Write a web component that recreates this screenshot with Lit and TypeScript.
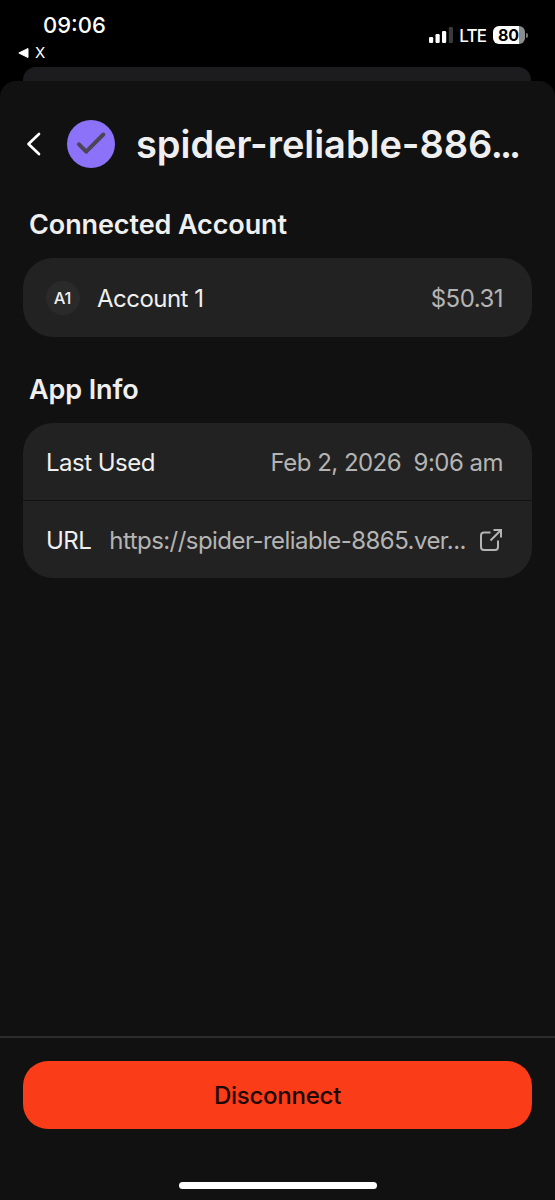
import { LitElement, html, css, svg } from "lit";
import { customElement } from "lit/decorators.js";

@customElement("status-bar")
class StatusBar extends LitElement {
  static styles = css`
    :host { display: flex; justify-content: space-between; height: 67px; color: #fff; }
    .left { display: flex; flex-direction: column; padding: 11px 0 0 18px; }
    .time { font-size: 22px; font-weight: 500; line-height: 28px; padding-left: 25px; letter-spacing: 0; }
    .back { display: flex; align-items: center; gap: 6px; font-size: 15px; line-height: 20px; margin-top: 4px; }
    .right { display: flex; align-items: center; height: 20px; padding: 25px 27px 0 0; }
    .lte { font-size: 17px; font-weight: 500; line-height: 20px; margin: 2px 7px 0 6px; letter-spacing: -0.9px; }
    .battery { display: flex; align-items: center; gap: 1px; }
    .cell { width: 32px; height: 18px; border-radius: 6px; color: #000;
      background: linear-gradient(90deg, #fff 80%, #8c8c8c 80%);
      font-size: 16px; font-weight: 700; line-height: 18px; text-indent: 5px; letter-spacing: -0.2px; }
    .nub { width: 2px; height: 5px; border-radius: 0 2px 2px 0; background: #777; }
    svg { display: block; }
  `;
  render() {
    return html`
      <div class="left">
        <div class="time">09:06</div>
        <div class="back">
          <svg width="11" height="10" viewBox="0 0 11 10"><path d="M10 .5v9L.8 5z" fill="#fff" stroke="#fff" stroke-linejoin="round"/></svg>
          <span>X</span>
        </div>
      </div>
      <div class="right">
        <svg width="24" height="16" viewBox="0 0 24 16">
          ${[[0, 10, 6], [6.5, 7, 9], [13, 4, 12], [19.8, 0, 16]].map(
            ([x, y, h], i) => svg`<rect x=${x} y=${y} width="4.2" height=${h} rx="1.2" fill=${i < 3 ? "#fff" : "#3a3a3a"}/>`
          )}
        </svg>
        <span class="lte">LTE</span>
        <div class="battery"><div class="cell">80</div><div class="nub"></div></div>
      </div>
    `;
  }
}

@customElement("app-root")
class AppRoot extends LitElement {
  static styles = css`
    :host { display: flex; flex-direction: column; height: 1200px; background: #000; overflow: hidden;
      font-family: Inter, "Liberation Sans", sans-serif; color: #efefef; white-space: nowrap; }
    .behind { height: 14px; margin: 0 24px 0 23px; border-radius: 13px 13px 0 0; background: #1c1c1e; flex: none; }
    .sheet { flex: 1; display: flex; flex-direction: column; background: #111; border-radius: 16px 16px 0 0; }
    .header { display: flex; align-items: center; height: 48px; padding: 39px 0 0 26px; }
    .chevron { width: 16px; margin-right: 25px; }
    .title { font-size: 38px; font-weight: 600; line-height: 48px; margin: 0 0 0 21px; letter-spacing: -0.05px; }
    .dots { letter-spacing: -3px; margin-left: -1.5px; }
    .section { font-size: 27px; font-weight: 600; line-height: 36px; margin: 39px 0 0 29px; letter-spacing: -0.1px; }
    .card { margin: 15px 23px 0; border-radius: 30px; background: #222; }
    .card + .section { margin-top: 35px; }
    .row { display: flex; align-items: center; height: 77px; padding: 0 29px 0 23px; font-size: 24px; letter-spacing: -0.52px; }
    .single { height: 79px; }
    .row + .row { border-top: 1px solid #111; }
    .row > span { padding-top: 1px; }
    .avatar { width: 34px; height: 34px; border-radius: 50%; background: #2a2a2a; text-align: center;
      font-size: 16.5px; font-weight: 500; line-height: 34px; margin-right: 17px; letter-spacing: -0.3px; text-indent: -1px; }
    .value { margin-left: auto; color: #b4b4b4; white-space: pre; }
    .url { margin-left: 18px; color: #b4b4b4; letter-spacing: -0.55px; }
    .open { margin-left: auto; }
    .footer { margin-top: auto; height: 162px; border-top: 2px solid #2c2c2c; display: flex; flex-direction: column; align-items: center; }
    .button { width: 509px; height: 68px; margin-top: 23px; border: 0; border-radius: 25px; background: #fa3c18;
      font: 500 24px/68px Inter, sans-serif; letter-spacing: -0.25px; color: #1c0703; padding: 1px 0 0; }
    .home { width: 198px; height: 7px; border-radius: 4px; background: #fff; margin-top: 53px; }
    svg { display: block; flex: none; }
  `;
  render() {
    return html`
      <status-bar></status-bar>
      <div class="behind"></div>
      <div class="sheet">
        <div class="header">
          <svg class="chevron" width="16" height="24" viewBox="0 0 16 24"><path d="M13 2 2.500 12 13 22" fill="none" stroke="#fff" stroke-width="2.700" stroke-linecap="round" stroke-linejoin="round"/></svg>
          <svg width="48" height="48" viewBox="0 0 48 48"><circle cx="24" cy="24" r="24" fill="#8c72f8"/><path d="M12 24.300l7.200 7.400L36.300 14.500" fill="none" stroke="#4a4658" stroke-width="4" stroke-linecap="round" stroke-linejoin="round"/></svg>
          <span class="title">spider-reliable-886<span class="dots">...</span></span>
        </div>
        <div class="section">Connected Account</div>
        <div class="card">
          <div class="row single">
            <div class="avatar">A1</div>
            <span class="account">Account 1</span>
            <span class="value money">$50.31</span>
          </div>
        </div>
        <div class="section info">App Info</div>
        <div class="card">
          <div class="row">
            <span class="used">Last Used</span>
            <span class="value date">Feb 2, 2026  9:06 am</span>
          </div>
          <div class="row">
            <span class="label">URL</span>
            <span class="url">https://spider-reliable-8865.ver...</span>
            <svg class="open" width="24" height="24" viewBox="0 0 24 24"><path d="M11.500 4.500H5Q2 4.500 2 7.500V19Q2 22 5 22H16Q19 22 19 19V12.500M14.500 2H22V9.500M22 2 11.500 12.500" fill="none" stroke="#b4b4b4" stroke-width="2"/></svg>
          </div>
        </div>
        <div class="footer">
          <button class="button">Disconnect</button>
          <div class="home"></div>
        </div>
      </div>
    `;
  }
}
